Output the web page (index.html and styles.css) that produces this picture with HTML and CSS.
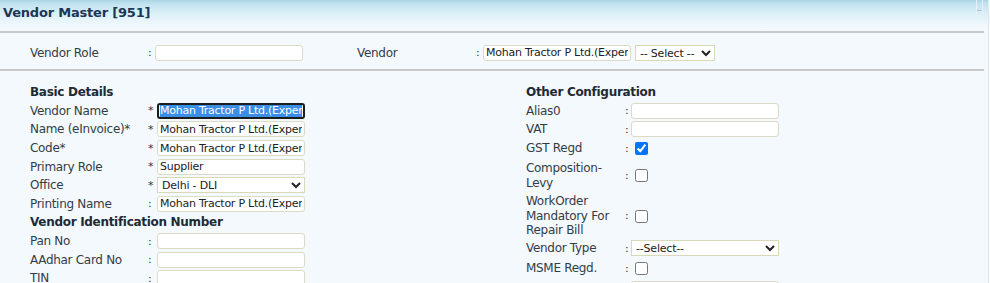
FILE: index.html
```html
<!DOCTYPE html>
<html>
<head>
<meta name="viewport" content="width=device-width, user-scalable=no">
<link rel="stylesheet" href="styles.css">
<title>Vendor Master</title>
</head>
<body>
<div class="page">
	<div class="header">
		<h1>Vendor Master [951]</h1>
		<span class="grip"></span>
	</div>

	<div class="toprow">
		<label for="role">Vendor Role</label>
		<span class="mk">:</span>
		<input id="role" class="txt">
		<label class="second" for="vendor">Vendor</label>
		<span class="mk">:</span>
		<input id="vendor" class="txt" value="Mohan Tractor P Ltd.(Exper">
		<select class="sel small"><option>-- Select --</option></select>
	</div>

	<div class="body">
		<div class="col left">
			<div class="head">Basic Details</div>
			<div class="row">
				<label>Vendor Name</label><span class="mk">*</span>
				<div class="txt focus"><span class="hl">Mohan Tractor P Ltd.(Exper</span></div>
			</div>
			<div class="row">
				<label>Name (eInvoice)*</label><span class="mk">*</span>
				<input class="txt" value="Mohan Tractor P Ltd.(Exper">
			</div>
			<div class="row">
				<label>Code*</label><span class="mk">*</span>
				<input class="txt" value="Mohan Tractor P Ltd.(Exper">
			</div>
			<div class="row">
				<label>Primary Role</label><span class="mk">*</span>
				<input class="txt" value="Supplier">
			</div>
			<div class="row">
				<label>Office</label><span class="mk">*</span>
				<select class="sel office"><option>Delhi - DLI</option></select>
			</div>
			<div class="row">
				<label>Printing Name</label><span class="mk">:</span>
				<input class="txt" value="Mohan Tractor P Ltd.(Exper">
			</div>
			<div class="head">Vendor Identification Number</div>
			<div class="row">
				<label>Pan No</label><span class="mk">:</span>
				<input class="txt">
			</div>
			<div class="row">
				<label>AAdhar Card No</label><span class="mk">:</span>
				<input class="txt">
			</div>
			<div class="row">
				<label>TIN</label><span class="mk">:</span>
				<input class="txt">
			</div>
		</div>

		<div class="col right">
			<div class="head">Other Configuration</div>
			<div class="row">
				<label>Alias0</label><span class="mk">:</span>
				<input class="txt">
			</div>
			<div class="row">
				<label>VAT</label><span class="mk">:</span>
				<input class="txt">
			</div>
			<div class="row">
				<label>GST Regd</label><span class="mk">:</span>
				<input class="chk" type="checkbox" checked>
			</div>
			<div class="row tall comp">
				<label>Composition-Levy</label><span class="mk">:</span>
				<input class="chk" type="checkbox">
			</div>
			<div class="row tall work">
				<label>WorkOrder Mandatory For Repair Bill</label><span class="mk">:</span>
				<input class="chk" type="checkbox">
			</div>
			<div class="row">
				<label>Vendor Type</label><span class="mk">:</span>
				<select class="sel office"><option>--Select--</option></select>
			</div>
			<div class="row check">
				<label>MSME Regd.</label><span class="mk">:</span>
				<input class="chk" type="checkbox">
			</div>
			<div class="row">
				<label>&nbsp;</label><span class="mk"></span>
				<input class="txt">
			</div>
		</div>
	</div>
</div>
</body>
</html>
```

FILE: styles.css
```css
* {
	box-sizing: border-box;
}
html, body {
	margin: 0;
	background-color: #f3f9fc;
}
body {
	font-family: "DejaVu Sans", Verdana, sans-serif;
	font-size: 12px;
	letter-spacing: -0.3px;
	color: #333c46;
	overflow: hidden;
}
.page {
	width: 989px;
	height: 283px;
	overflow: hidden;
	border-right: 1px solid #e2e9ed;
}
.header {
	height: 31px;
	display: flex;
	justify-content: space-between;
	background: linear-gradient(to bottom, #a8d4e5 0, #bfe1ee 3px, #dcf0f7 14px, #f3f9fc 27px);
}
.header h1 {
	margin: 0;
	padding: 5px 0 0 3px;
	font-size: 13px;
	font-weight: bold;
	letter-spacing: -0.2px;
	color: #1b3756;
}
.grip {
	width: 7px;
	height: 21px;
	margin-right: 5px;
	border-left: 1px solid #e6f1f5;
	border-right: 1px solid #e6f1f5;
	background: linear-gradient(to bottom, transparent 10px, #b7c4ca 10px, #b7c4ca 11px, transparent 11px);
}

.toprow {
	margin-right: 4px;
	height: 40px;
	padding: 3px 0 0 30px;
	display: flex;
	align-items: center;
	border-top: 2px solid #c7c9ca;
	border-bottom: 2px solid #c7c9ca;
}
.toprow label {
	width: 118px;
}
.toprow .mk {
	width: 7px;
}
.toprow .second {
	width: 119px;
	margin-left: 54px;
}

.mk {
	font-size: 11px;
	color: #333;
}
.txt {
	width: 148px;
	height: 16px;
	margin: 0;
	padding: 0 2px;
	border: 1px solid #dcdcc6;
	border-radius: 3px;
	background-color: #ffffff;
	font-family: "DejaVu Sans", Verdana, sans-serif;
	font-size: 11px;
	letter-spacing: -0.25px;
	color: #222;
	outline: none;
	overflow: hidden;
	white-space: nowrap;
}
.txt.focus {
	border: 2px solid #1c1c1c;
	padding: 0 1px;
	line-height: 12px;
}
.hl {
	background-color: #3a8ee6;
	color: #ffffff;
}
.sel {
	height: 16px;
	margin: 0;
	padding: 0;
	border: 1px solid #d9d9b9;
	border-radius: 0;
	background-color: #ffffff;
	font-family: "DejaVu Sans", Verdana, sans-serif;
	font-size: 11px;
	letter-spacing: -0.2px;
	color: #222;
}
.sel.small {
	width: 80px;
	margin-left: 4px;
}
.sel.office {
	width: 148px;
}

.body {
	display: flex;
	padding: 12px 0 0 30px;
}
.col.left {
	width: 275px;
}
.col.right {
	margin-left: 221px;
}
.head {
	height: 18.6px;
	line-height: 18.6px;
	font-weight: bold;
	color: #1e2a36;
}
.row {
	display: grid;
	grid-template-columns: 118px 9px 148px;
	align-items: center;
	min-height: 18.6px;
}
.right .row {
	grid-template-columns: 99px 6px 148px;
}
.row.tall {
	line-height: 14.5px;
}
.row.comp {
	padding: 4px 0 1px;
}
.row.work {
	padding: 3px 0 1px;
}
.row.check {
	min-height: 22px;
}
.chk {
	width: 13px;
	height: 13px;
	margin: 0 0 0 4px;
}
```
